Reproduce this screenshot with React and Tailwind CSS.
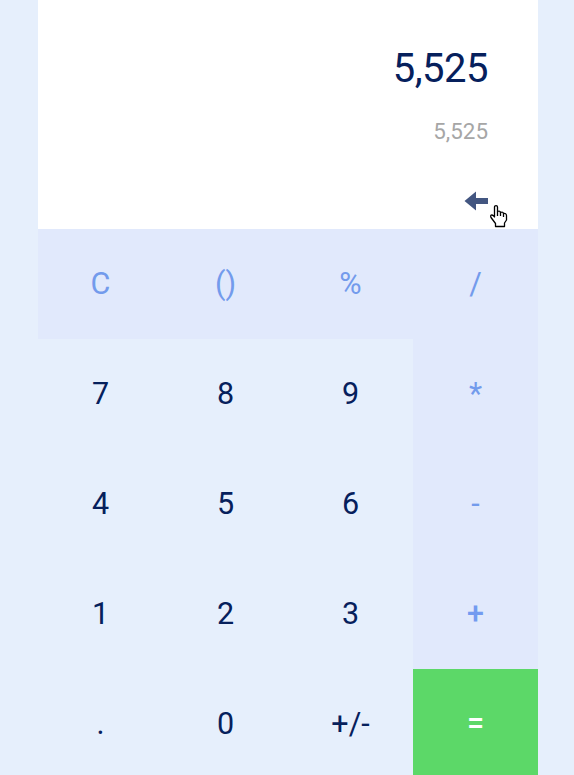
const keys = [
  ['C', '()', '%', '/'],
  ['7', '8', '9', '*'],
  ['4', '5', '6', '-'],
  ['1', '2', '3', '+'],
  ['.', '0', '+/-', '='],
];

function keyStyle(row, col) {
  if (row === 4 && col === 3) return 'bg-[#5cd868] text-white font-medium';
  if (row === 3 && col === 3) return 'bg-[#e1e9fc] text-[#739bf0] font-medium';
  if (row === 0 || col === 3) return 'bg-[#e1e9fc] text-[#739bec]';
  return 'text-[#06205c]';
}

export default function App() {
  return (
    <div className="h-[775px] w-[574px] overflow-hidden bg-[#e6effc] pl-[38px] font-['Roboto',sans-serif]">
      <main className="w-[500px]">
        <section className="relative flex h-[229px] flex-col items-end bg-white pr-[50px] pt-[45px]">
          <div className="text-[40px] leading-[48px] tracking-[-0.5px] text-[#06205c]">5,525</div>
          <div className="mt-[25px] text-[22.4px] leading-[26px] text-[#a6a6a6]">5,525</div>
          <button className="mt-[47px]" aria-label="Backspace">
            <svg width="24" height="20" viewBox="0 0 24 20" fill="#435681">
              <path d="M0.500 10 12 .500V7H24V13H12V19.500Z" />
            </svg>
          </button>
          <svg className="absolute left-[452px] top-[205px]" width="18" height="23" viewBox="0 0 18 23" fill="white" stroke="black" strokeWidth="1.3" strokeLinejoin="round">
            <path d="M4.500 12V2Q4.500 .7 6 .7T7.500 2V6.500Q10 5.500 10.500 7.500Q13 6.500 13.500 8.500Q16.300 8 16.500 10.500V15L14.500 18V21.500H5.500V18.500L1 12.500Q0 10 2 10Q3.500 10.200 4.500 12Z" />
            <path d="M7.500 6.500V11M10.500 7.500V11M13.500 8.500V12" />
          </svg>
        </section>
        <section className="grid grid-cols-4 auto-rows-[110px]">
          {keys.map((row, r) =>
            row.map((label, c) => (
              <button key={label} className={`flex items-center justify-center pb-px text-[30.5px] ${keyStyle(r, c)}`}>
                {label}
              </button>
            ))
          )}
        </section>
      </main>
    </div>
  );
}
